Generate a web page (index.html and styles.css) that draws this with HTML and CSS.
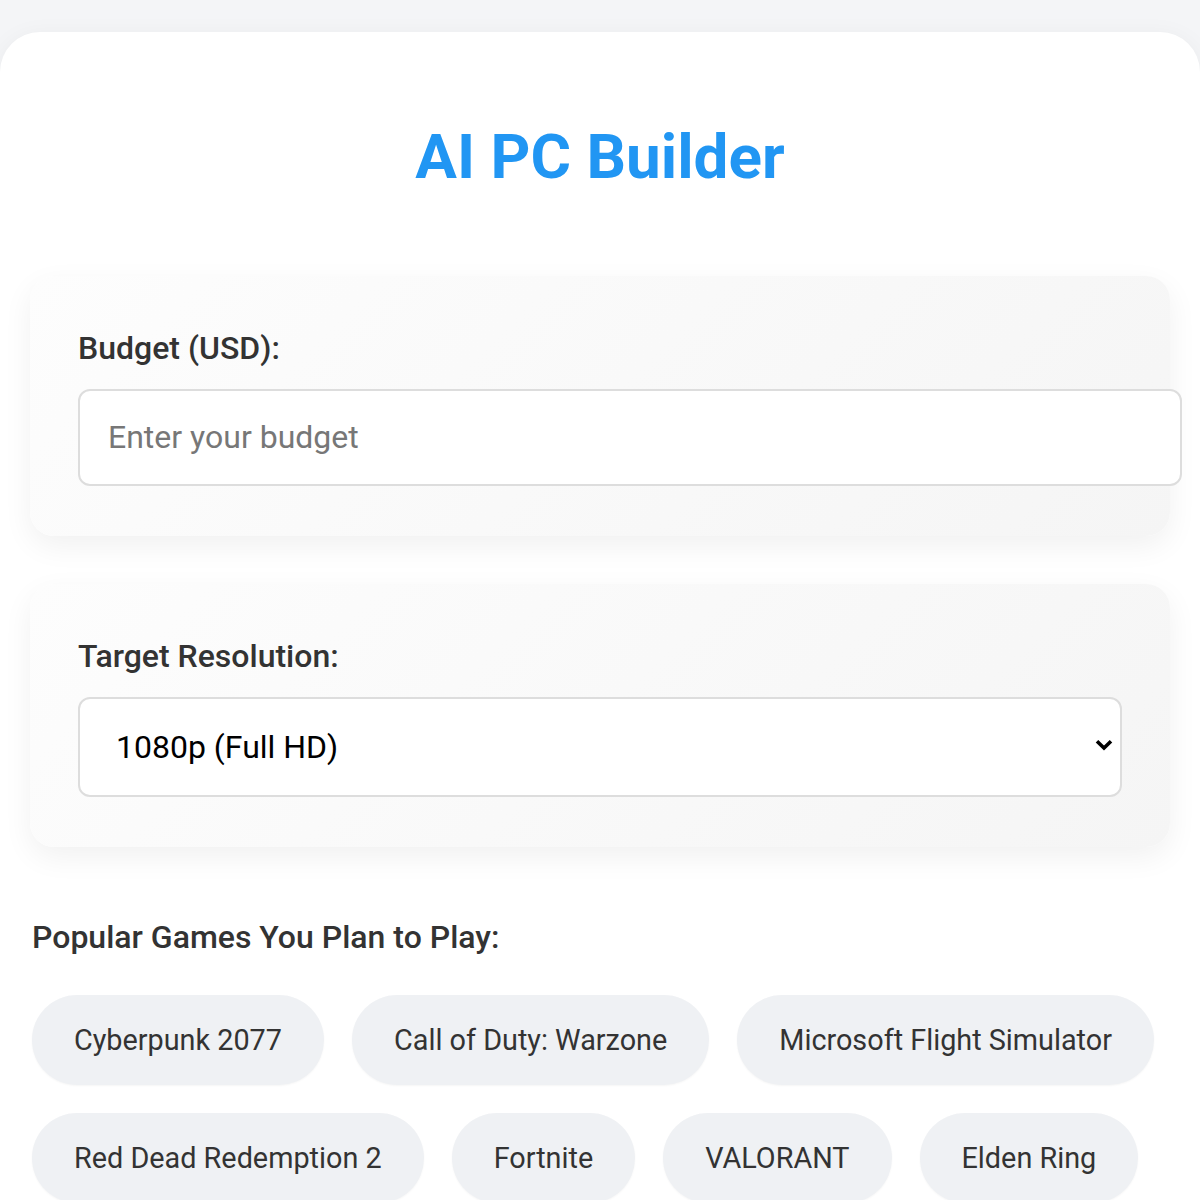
FILE: index.html
```html
<!DOCTYPE html>
<html lang="en">
<head>
<meta charset="utf-8">
<title>AI PC Builder</title>
<link rel="stylesheet" href="styles.css">
</head>
<body>
<main class="container">
  <h1 class="title">AI PC Builder</h1>

  <section class="card">
    <label class="field-label" for="budget">Budget (USD):</label>
    <input class="text-input" id="budget" type="number" placeholder="Enter your budget">
  </section>

  <section class="card">
    <label class="field-label" for="res">Target Resolution:</label>
    <div class="select-wrap">
      <select class="select" id="res">
        <option>1080p (Full HD)</option>
        <option>1440p (QHD)</option>
        <option>4K (UHD)</option>
      </select>
      <svg class="chevron" width="18" height="12" viewBox="0 0 18 12"><path d="M2 2.2 L9 9 L16 2.2" fill="none" stroke="#000" stroke-width="3.6"/></svg>
    </div>
  </section>

  <h2 class="games-label">Popular Games You Plan to Play:</h2>
  <div class="chips">
    <button class="chip">Cyberpunk 2077</button>
    <button class="chip">Call of Duty: Warzone</button>
    <button class="chip">Microsoft Flight Simulator</button>
    <button class="chip">Red Dead Redemption 2</button>
    <button class="chip">Fortnite</button>
    <button class="chip">VALORANT</button>
    <button class="chip">Elden Ring</button>
  </div>
</main>
</body>
</html>
```

FILE: styles.css
```css
html, body {
  margin: 0;
  padding: 0;
}
body {
  background: #f4f5f7;
  font-family: Roboto, "Liberation Sans", sans-serif;
  padding-top: 32px;
}
.container {
  box-sizing: border-box;
  width: 1200px;
  background: #ffffff;
  border-radius: 40px 40px 0 0;
  padding: 30px 32px;
  box-shadow: 0 4px 24px rgba(0, 0, 0, 0.05);
  min-height: 1200px;
}
.title {
  margin: 55px 0 79px;
  text-align: center;
  color: #2196f3;
  font-size: 62px;
  font-weight: 700;
  line-height: 80px;
}
.card {
  background: linear-gradient(135deg, #fdfdfd, #f5f5f5);
  border-radius: 24px;
  padding: 53px 48px 50px;
  margin: 0 -2px 48px;
  box-shadow: 0 10px 30px rgba(0, 0, 0, 0.06);
}
.field-label {
  display: block;
  font-size: 32px;
  line-height: 38px;
  font-weight: 500;
  color: #333333;
  margin-bottom: 22px;
}
.text-input {
  display: block;
  width: 100%;
  padding: 28px;
  border: 2px solid #dddddd;
  border-radius: 12px;
  font-family: inherit;
  font-size: 32px;
  line-height: 37px;
  color: #222;
  background: #fff;
  outline: none;
}
.text-input::placeholder {
  color: #777777;
}
.select-wrap {
  position: relative;
}
.select {
  display: block;
  width: 100%;
  height: 100px;
  padding: 0 36px;
  border: 2px solid #dddddd;
  border-radius: 12px;
  font-family: inherit;
  font-size: 32px;
  color: #000;
  background: #fff;
  appearance: none;
  -webkit-appearance: none;
  outline: none;
}
.chevron {
  position: absolute;
  right: 9px;
  top: 42px;
  pointer-events: none;
}
.games-label {
  margin: 71px 0 39px;
  font-size: 32px;
  font-weight: 500;
  color: #333333;
  line-height: 38px;
}
.chips {
  display: flex;
  flex-wrap: wrap;
  gap: 28px;
}
.chip {
  border: none;
  background: #eff1f4;
  border-radius: 999px;
  padding: 28px 42px;
  font-family: inherit;
  font-size: 28.8px;
  line-height: 34px;
  color: #333333;
  box-shadow: 0 1px 2px rgba(0, 0, 0, 0.04);
}
```
